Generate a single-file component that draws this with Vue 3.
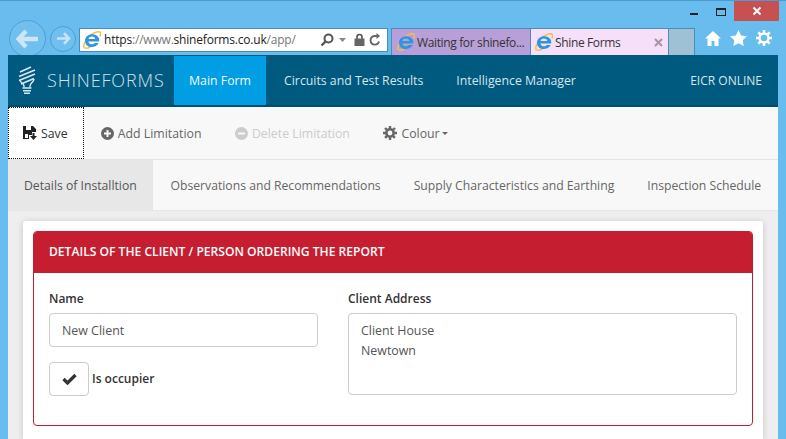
<script setup>
const navItems = ['Circuits and Test Results', 'Intelligence Manager']
const tabs = ['Observations and Recommendations', 'Supply Characteristics and Earthing', 'Inspection Schedule']
</script>

<template>
  <div class="window">
    <svg width="0" height="0" class="defs">
      <defs>
        <symbol id="ie" viewBox="1 1 18.500 18.500">
          <path d="M2.500 18.200C-.5 16.500 6 4.500 15 2c4.200-1.200 5 1.400 3.300 4.600" fill="none" stroke="#f2c04a" stroke-width="1.600" />
          <path d="M2.500 18.200c1.500 1 4.200.2 6-.9" fill="none" stroke="#f2c04a" stroke-width="1.400" />
          <path d="M17.600 11.800H6.600c.3 3 4.200 4 6.600 1.500h3.900c-2.600 5.700-13.900 6-14-2.300C3 3.200 14.800 2 17.300 8.300c.5 1.200.4 2.500.3 3.500zM6.600 9.200h7c-.3-3.400-6.500-3.400-7 0z" fill="#2f95dc" fill-rule="evenodd" />
        </symbol>
      </defs>
    </svg>

    <div class="caption">
      <span class="min"></span>
      <span class="max"></span>
      <span class="close">
        <svg width="10" height="10" viewBox="0 0 10 10"><path d="M1.500 1.500l7 7M8.500 1.500l-7 7" stroke="#fff" stroke-width="2" /></svg>
      </span>
    </div>

    <div class="browser">
      <button class="round back">
        <svg width="23" height="20" viewBox="0 0 23 20"><path d="M10 2L2.500 10l7.500 8M4 10H22" fill="none" stroke="#cde5f6" stroke-width="4.400" /></svg>
      </button>
      <button class="round forward">
        <svg width="15" height="13" viewBox="0 0 15 13"><path d="M8 1.200l5 5.300-5 5.300M12 6.500H1" fill="none" stroke="#c8e3f5" stroke-width="2.600" /></svg>
      </button>
      <div class="address">
        <svg class="ie" width="18" height="18"><use href="#ie" /></svg>
        <span class="url">https<span class="dim">://www.</span>shineforms.co.uk<span class="dim">/app/</span></span>
        <span class="addr-icons">
          <svg width="14" height="14" viewBox="0 0 14 14"><circle cx="8.500" cy="5.500" r="4" fill="none" stroke="#555" stroke-width="2" /><path d="M5.500 8.500L1.500 12.500" stroke="#555" stroke-width="2.400" /></svg>
          <svg class="arrow" width="7" height="4" viewBox="0 0 7 4"><path d="M0 0h7L3.500 4z" fill="#888" /></svg>
          <svg width="11" height="13" viewBox="0 0 11 13"><path d="M3 6V4a2.500 2.500 0 015 0v2" fill="none" stroke="#555" stroke-width="1.600" /><rect x="0.500" y="5.500" width="10" height="7.500" fill="#666" /></svg>
          <svg width="12" height="13" viewBox="0 0 12 13"><path d="M10 8.500A4.300 4.300 0 115.500 3H8" fill="none" stroke="#666" stroke-width="1.800" /><path d="M7.500 0v6l3.500-3z" fill="#666" /></svg>
        </span>
      </div>
      <div class="ie-tab waiting">
        <svg class="ie" width="18" height="18"><use href="#ie" /></svg>
        <span>Waiting for shinefo...</span>
      </div>
      <div class="ie-tab active">
        <svg class="ie" width="18" height="18"><use href="#ie" /></svg>
        <span class="ie-tab-title">Shine Forms</span>
        <svg width="9" height="9" viewBox="0 0 9 9"><path d="M1 1l7 7M8 1L1 8" stroke="#a593a8" stroke-width="2" /></svg>
      </div>
      <div class="ie-tab blank"></div>
      <div class="tools">
        <svg width="16" height="15" viewBox="0 0 16 15"><path d="M8 0L0 7.500h2.500V15h4v-5h3v5h4V7.500H16z" fill="#fff" /></svg>
        <svg width="17" height="16" viewBox="0 0 17 16"><path d="M8.500 0l2.600 5.400 5.900.8-4.300 4.100 1 5.700-5.200-2.800L3.300 16l1-5.700L0 6.200l5.900-.8z" fill="#fff" /></svg>
        <svg width="16" height="16" viewBox="0 0 16 16"><circle cx="8" cy="8" r="4.500" fill="none" stroke="#fff" stroke-width="2.400" /><path d="M8 0v16M0 8h16M2.300 2.300l11.400 11.400M13.700 2.300L2.300 13.700" stroke="#fff" stroke-width="2.600" stroke-dasharray="3 10 3" /></svg>
      </div>
    </div>

    <div class="page">
      <nav class="navbar">
        <div class="brand">
          <svg width="18" height="28" viewBox="0 0 18 28"><path d="M2 6l11-5M1 10.500l16-6.500M1 14.500l16-6.500M3 18l13-5.500" stroke="#d6e8ef" stroke-width="1.700" fill="none" /><path d="M2 14c0 3 4 3 4 6v1.500M16 13c0 3-4 4-4 7v1.500" stroke="#d6e8ef" stroke-width="1.400" fill="none" /><path d="M4.500 22h9M5 24.800h8M6 27.300h6" stroke="#d6e8ef" stroke-width="1.500" /></svg>
          <span>SHINEFORMS</span>
        </div>
        <a class="nav-item current">Main Form</a>
        <a v-for="item in navItems" :key="item" class="nav-item">{{ item }}</a>
        <a class="nav-item right">EICR ONLINE</a>
      </nav>

      <div class="toolbar">
        <button class="tool save">
          <svg width="14" height="14" viewBox="0 0 14 14"><path d="M0 0h10l3 3v3H9v3H6v4H0zM3 0v4h5V0zM2 8v4h3V8z" fill="#222" fill-rule="evenodd" /><path d="M9.500 7h2v3H14l-3.500 4L7 10h2.500z" fill="#222" /></svg>
          Save
        </button>
        <button class="tool">
          <svg width="13" height="13" viewBox="0 0 13 13"><circle cx="6.500" cy="6.500" r="6.500" fill="#666" /><path d="M6.500 3v7M3 6.500h7" stroke="#f8f8f8" stroke-width="2" /></svg>
          Add Limitation
        </button>
        <button class="tool disabled">
          <svg width="13" height="13" viewBox="0 0 13 13"><circle cx="6.500" cy="6.500" r="6.500" fill="#ccc" /><path d="M3 6.500h7" stroke="#f8f8f8" stroke-width="2" /></svg>
          Delete Limitation
        </button>
        <button class="tool">
          <svg width="14" height="14" viewBox="0 0 14 14"><circle cx="7" cy="7" r="3.700" fill="none" stroke="#666" stroke-width="2.600" /><path d="M7 0v14M0 7h14M2 2l10 10M12 2L2 12" stroke="#666" stroke-width="2.400" stroke-dasharray="2.500 9 2.500" /></svg>
          Colour<span class="caret"></span>
        </button>
      </div>

      <div class="tabs">
        <a class="tab current">Details of Installtion</a>
        <a v-for="tab in tabs" :key="tab" class="tab">{{ tab }}</a>
      </div>

      <main class="content">
        <section class="card">
          <div class="panel">
            <h2 class="panel-head">DETAILS OF THE CLIENT / PERSON ORDERING THE REPORT</h2>
            <div class="panel-body">
              <div class="col-left">
                <label class="label">Name</label>
                <div class="input">New Client</div>
                <div class="check-row">
                  <span class="check">
                    <svg width="15" height="12" viewBox="0 0 15 12"><path d="M1.500 6l4 4 8-8" fill="none" stroke="#333" stroke-width="3.200" /></svg>
                  </span>
                  <span class="label inline">Is occupier</span>
                </div>
              </div>
              <div class="col-right">
                <label class="label">Client Address</label>
                <div class="textarea">Client House<br />Newtown</div>
              </div>
            </div>
          </div>
        </section>
      </main>
    </div>
  </div>
</template>

<style scoped>
.window {
  width: 786px;
  height: 439px;
  overflow: hidden;
  box-sizing: border-box;
  background: #68bcee;
  border-top: 1px solid #4c9bd0;
  font-family: "Open Sans", sans-serif;
  font-size: 12.200px;
  color: #555;
  display: flex;
  flex-direction: column;
}
.defs { position: absolute; }
.caption {
  height: 20px;
  display: flex;
  justify-content: flex-end;
  align-items: flex-start;
  padding-right: 7px;
}
.min { width: 8px; height: 2px; margin: 12px 18px 0 0; background: #222; }
.max { width: 8px; height: 5px; margin: 7px 8px 0 0; border: 1px solid #222; border-top-width: 2px; }
.close {
  width: 45px;
  height: 20px;
  background: #c75050;
  display: flex;
  align-items: center;
  justify-content: center;
}
.browser {
  height: 34px;
  display: flex;
  align-items: center;
  padding-left: 9px;
}
.round {
  box-sizing: border-box;
  padding: 0;
  border: 1px solid #4f9fd2;
  border-radius: 50%;
  background: #6fbfef;
  display: flex;
  align-items: center;
  justify-content: center;
  flex: none;
}
.back { width: 37px; height: 37px; margin-right: 4px; margin-top: 1px; }
.forward { width: 26px; height: 26px; margin-right: 3px; margin-top: 1px; }
.address {
  box-sizing: border-box;
  width: 309px;
  height: 24px;
  margin: 3px 3px 0 0;
  border: 1px solid #4a8db5;
  background: #fff;
  display: flex;
  align-items: center;
  padding: 0 6px 0 3px;
  color: #222;
  font-size: 12px;
  letter-spacing: -.2px;
}
.ie { flex: none; margin-right: 3px; }
.url { white-space: nowrap; }
.dim { color: #777; }
.addr-icons { margin-left: auto; display: flex; align-items: center; gap: 4px; }
.arrow { margin: 0 4px 0 1px; }
.ie-tab {
  box-sizing: border-box;
  height: 27px;
  margin-top: 7px;
  border: 1px solid #4a8db5;
  border-right: 0;
  border-bottom: 0;
  display: flex;
  align-items: center;
  padding-left: 5px;
  white-space: nowrap;
  flex: none;
  font-size: 12px;
  letter-spacing: -.36px;
  color: #333;
}
.ie-tab .ie { margin-right: 2px; }
.waiting { width: 139px; background: #b89fd7; }
.active { width: 138px; background: #f6dff8; padding-right: 5px; padding-left: 4px; }
.ie-tab-title { flex: 1; }
.blank { width: 27px; background: #9fc1d6; border-right: 1px solid #4a8db5; }
.tools { display: flex; gap: 9px; align-items: center; margin: 0 0 0 10px; }
.page {
  width: 770px;
  margin-left: 8px;
  flex: 1;
  min-height: 0;
  background: #eee;
  display: flex;
  flex-direction: column;
}
.navbar {
  height: 52px;
  flex: none;
  background: #005a80;
  display: flex;
  align-items: stretch;
  box-sizing: border-box;
  border-bottom: 2px solid #004f70;
}
.brand {
  width: 166px;
  display: flex;
  align-items: center;
  padding-left: 10px;
  box-sizing: border-box;
  gap: 11px;
  color: #cfe3ec;
  font-size: 18px;
  letter-spacing: .85px;
  font-weight: 300;
}
.nav-item {
  display: flex;
  align-items: center;
  padding: 0 16.500px;
  color: #d4e6ee;
  font-size: 12.300px;
  white-space: nowrap;
}
.nav-item.current { background: #019ee3; color: #eef9ff; padding: 0; width: 92px; justify-content: center; margin: 1px 1.500px 0 0; }
.nav-item.right { margin-left: auto; padding-right: 16px; font-size: 12px; }
.toolbar {
  height: 53px;
  flex: none;
  background: #f8f8f8;
  border-bottom: 1px solid #e4e4e4;
  box-sizing: border-box;
  display: flex;
  align-items: stretch;
}
.tool {
  border: 0;
  background: transparent;
  padding: 0 16.750px;
  font: inherit;
  font-size: 12.300px;
  color: #666;
  display: flex;
  align-items: center;
  gap: 4px;
  white-space: nowrap;
}
.save {
  width: 76px;
  height: 52px;
  box-sizing: border-box;
  padding: 0 0 0 15px;
  background: #fff;
  color: #333;
  outline: 1px dotted #111;
  outline-offset: -1px;
}
.disabled { color: #ccc; }
.caret {
  display: inline-block;
  margin-left: -2px;
  border: 3.500px solid transparent;
  border-top-color: #666;
  border-bottom: 0;
}
.tabs {
  height: 51px;
  flex: none;
  background: #f8f8f8;
  border-bottom: 1px solid #e6e6e6;
  box-sizing: border-box;
  display: flex;
  align-items: stretch;
}
.tab {
  display: flex;
  align-items: center;
  padding: 0 16.500px;
  color: #666;
  white-space: nowrap;
  font-size: 12.200px;
}
.tab.current { background: #e7e7e7; padding: 0 16px; width: 145px; box-sizing: border-box; color: #555; margin-right: 1px; }
.content { flex: 1; padding: 10px 15px 0; min-height: 0; }
.card {
  height: 100%;
  background: #fff;
  padding: 10px;
  box-sizing: border-box;
  border-radius: 3px 3px 0 0;
  box-shadow: 0 1px 6px rgba(0, 0, 0, .18);
}
.panel {
  height: 195px;
  box-sizing: border-box;
  border: 1px solid #c41e30;
  border-radius: 4px;
  overflow: hidden;
}
.panel-head {
  margin: -1px -1px 0;
  height: 42px;
  background: #c41e30;
  color: #fff;
  font-size: 12.100px;
  font-weight: 600;
  line-height: 42px;
  padding-left: 16px;
}
.panel-body {
  display: flex;
  padding: 17px 15px 0;
  gap: 30px;
}
.col-left { width: 269px; flex: none; }
.col-right { flex: 1; }
.label { display: block; color: #333; font-weight: 600; font-size: 12px; line-height: 18px; margin-bottom: 5px; }
.label.inline { margin: 0 0 0 3px; }
.input {
  height: 34px;
  box-sizing: border-box;
  border: 1px solid #ccc;
  border-radius: 4px;
  padding: 0 12px;
  line-height: 33px;
  font-size: 12.400px;
}
.check-row { display: flex; align-items: center; margin-top: 15px; }
.check {
  width: 40px;
  height: 34px;
  box-sizing: border-box;
  border: 1px solid #ccc;
  border-radius: 4px;
  display: flex;
  align-items: center;
  justify-content: center;
}
.textarea {
  height: 82px;
  box-sizing: border-box;
  border: 1px solid #ccc;
  border-radius: 4px;
  padding: 7px 12px;
  font-size: 12.400px;
  line-height: 20px;
}
</style>
